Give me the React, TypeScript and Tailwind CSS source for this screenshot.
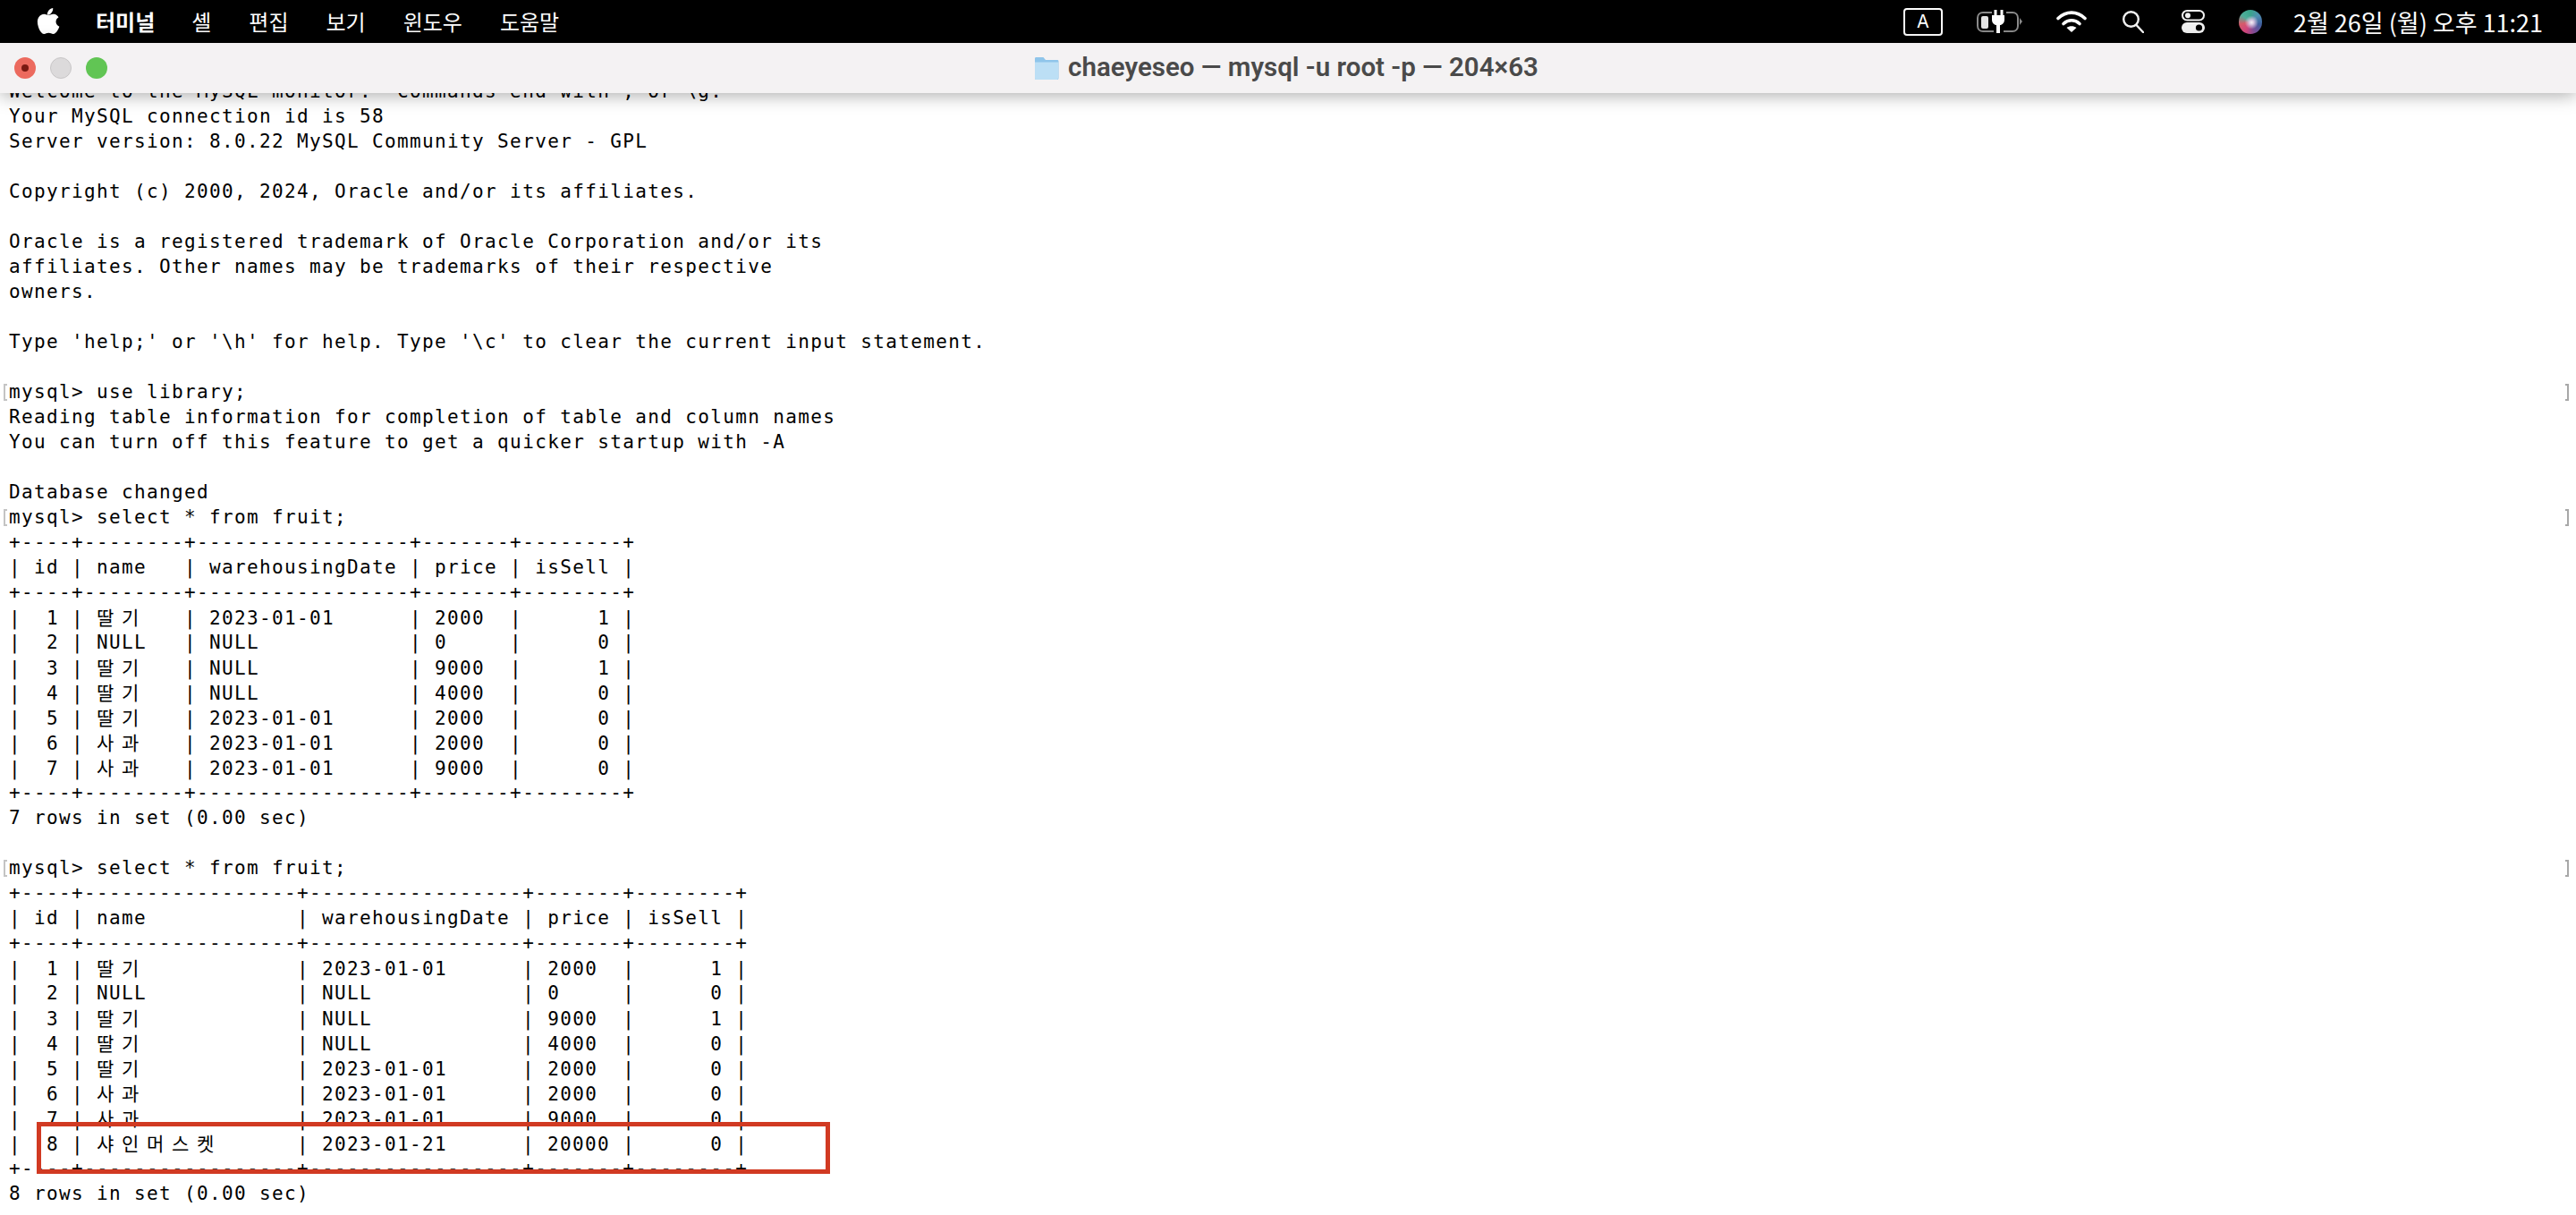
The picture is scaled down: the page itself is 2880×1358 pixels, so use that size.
const mono = "font-['DejaVu_Sans_Mono','Liberation_Mono',monospace]"

const firstTable = [
  '+----+--------+-----------------+-------+--------+',
  '| id | name   | warehousingDate | price | isSell |',
  '+----+--------+-----------------+-------+--------+',
  '|  1 | 딸기   | 2023-01-01      | 2000  |      1 |',
  '|  2 | NULL   | NULL            | 0     |      0 |',
  '|  3 | 딸기   | NULL            | 9000  |      1 |',
  '|  4 | 딸기   | NULL            | 4000  |      0 |',
  '|  5 | 딸기   | 2023-01-01      | 2000  |      0 |',
  '|  6 | 사과   | 2023-01-01      | 2000  |      0 |',
  '|  7 | 사과   | 2023-01-01      | 9000  |      0 |',
  '+----+--------+-----------------+-------+--------+',
]

const secondTable = [
  '+----+-----------------+-----------------+-------+--------+',
  '| id | name            | warehousingDate | price | isSell |',
  '+----+-----------------+-----------------+-------+--------+',
  '|  1 | 딸기            | 2023-01-01      | 2000  |      1 |',
  '|  2 | NULL            | NULL            | 0     |      0 |',
  '|  3 | 딸기            | NULL            | 9000  |      1 |',
  '|  4 | 딸기            | NULL            | 4000  |      0 |',
  '|  5 | 딸기            | 2023-01-01      | 2000  |      0 |',
  '|  6 | 사과            | 2023-01-01      | 2000  |      0 |',
  '|  7 | 사과            | 2023-01-01      | 9000  |      0 |',
  '|  8 | 샤인머스켓      | 2023-01-21      | 20000 |      0 |',
  '+----+-----------------+-----------------+-------+--------+',
]

const lines = [
  'Welcome to the MySQL monitor.  Commands end with ; or \\g.',
  'Your MySQL connection id is 58',
  'Server version: 8.0.22 MySQL Community Server - GPL',
  '',
  'Copyright (c) 2000, 2024, Oracle and/or its affiliates.',
  '',
  'Oracle is a registered trademark of Oracle Corporation and/or its',
  'affiliates. Other names may be trademarks of their respective',
  'owners.',
  '',
  "Type 'help;' or '\\h' for help. Type '\\c' to clear the current input statement.",
  '',
  'mysql> use library;',
  'Reading table information for completion of table and column names',
  'You can turn off this feature to get a quicker startup with -A',
  '',
  'Database changed',
  'mysql> select * from fruit;',
  ...firstTable,
  '7 rows in set (0.00 sec)',
  '',
  'mysql> select * from fruit;',
  ...secondTable,
  '8 rows in set (0.00 sec)',
]

// hangul takes two terminal cells, the glyph sits at the left of them
function TermText({ text }: { text: string }) {
  const parts = text.split(/([\uac00-\ud7a3])/)
  return (
    <>
      {parts.map((part, i) =>
        /[\uac00-\ud7a3]/.test(part) ? (
          <span key={i} className="inline-block w-[28px] text-[21px] tracking-normal font-['Noto_Sans_CJK_KR',sans-serif]">
            {part}
          </span>
        ) : (
          <span key={i}>{part}</span>
        ),
      )}
    </>
  )
}

function TermLine({ text }: { text: string }) {
  const marked = text.startsWith('mysql>')
  return (
    <div className="flex h-[28px] items-center">
      <div className="flex w-[10px] shrink-0 justify-start pl-[4px]">
        {marked && <div className="h-[19px] w-[4px] border-y-2 border-l-2 border-[#c4c4c4]" />}
      </div>
      <div className="flex-1 whitespace-pre">
        <TermText text={text} />
      </div>
      <div className="flex w-[12px] shrink-0 justify-start">
        {marked && <div className="h-[19px] w-[4px] border-y-2 border-r-2 border-[#a8a8a8]" />}
      </div>
    </div>
  )
}

function MenuBar() {
  const items = ['셸', '편집', '보기', '윈도우', '도움말']
  return (
    <div className="flex h-[48px] items-center bg-black pl-[41px] pr-[40px] text-white font-['Noto_Sans_CJK_KR',sans-serif]">
      <svg viewBox="0 0 26 30" className="h-[30px] w-[26px] fill-white">
        <path d="M18.2 0c.2 2-.5 3.9-1.6 5.2-1.100 1.400-2.900 2.500-4.700 2.300-.2-1.900.7-3.900 1.700-5.100C14.800 1 16.800.1 18.200 0zM24.500 10.300c-1.700 1-3 2.800-3 5 0 2.600 1.600 4.500 3.900 5.500-.5 1.500-1.200 3-2.200 4.400-1.300 1.900-2.700 3.800-4.800 3.800-2 0-2.700-1.200-5-1.200-2.400 0-3.100 1.200-5 1.200-2 .1-3.500-2.100-4.900-4C1.600 21.100-.6 14.700 2.300 10.300 3.700 8 6 6.700 8.300 6.700c2.100 0 3.700 1.300 5 1.300 1.300 0 3.200-1.500 5.500-1.300 1 0 3.800.4 5.700 3.600z" />
      </svg>
      <span className="ml-[40px] text-[24px] font-bold leading-none">터미널</span>
      <div className="ml-[41px] flex items-center gap-[42px] text-[24px] leading-none">
        {items.map((item) => (
          <span key={item}>{item}</span>
        ))}
      </div>
      <div className="ml-auto flex items-center">
        <div className="flex h-[31px] w-[44px] items-center justify-center rounded-[4px] border-2 border-white text-[20px] font-['Inter',sans-serif]">A</div>
        <svg viewBox="0 0 51 26" className="ml-[38px] h-[26px] w-[51px]" fill="none">
          <path d="M17 3H7C3.500 3 1 5.500 1 9v9c0 3.500 2.500 6 6 6h12M30 24h10c3.500 0 6-2.500 6-6V9c0-3.500-2.500-6-6-6H33" stroke="#8a8a8a" strokeWidth="2" />
          <rect x="5" y="7" width="8" height="14" rx="2" fill="#e4e4e4" />
          <path d="M48 9l3 4-3 4z" fill="#8a8a8a" />
          <path d="M21 0v7M28 0v7" stroke="#fff" strokeWidth="3" />
          <path d="M17 6h14v5c0 3.500-2.500 6-5 6v9h-4v-9c-2.500 0-5-2.500-5-6z" fill="#fff" />
        </svg>
        <svg viewBox="0 0 34 24" className="ml-[38px] h-[24px] w-[34px]" fill="none" stroke="#fff" strokeWidth="3.600" strokeLinecap="round">
          <path d="M2 8.500c9-8.500 21-8.500 30 0" />
          <path d="M8 14.500c5.500-5 12.500-5 18 0" />
          <path d="M17 24l-5.500-5c3-2.500 8-2.500 11 0z" fill="#fff" stroke="none" />
        </svg>
        <svg viewBox="0 0 24 25" className="ml-[40px] h-[25px] w-[24px]" fill="none" stroke="#f2f2f2" strokeWidth="2.400">
          <circle cx="9.500" cy="9.500" r="8.300" />
          <path d="M15.500 16l7.500 8" strokeLinecap="round" />
        </svg>
        <svg viewBox="0 0 26 26" className="ml-[42px] h-[26px] w-[26px]">
          <rect x="1" y="1" width="24" height="10.500" rx="5.200" fill="none" stroke="#f2f2f2" strokeWidth="2" />
          <circle cx="7" cy="6.200" r="3" fill="#f2f2f2" />
          <rect y="14" width="26" height="12" rx="6" fill="#f2f2f2" />
          <circle cx="19.500" cy="20" r="3.600" fill="#000" />
        </svg>
        <div className="ml-[38px] h-[27px] w-[26px] rounded-full bg-[radial-gradient(circle_at_55%_52%,#f4f2f6_0%,#d9c6e0_12%,transparent_38%),conic-gradient(from_0deg,#3aa58c,#4f8fb0,#3f5f9e,#7a4f9a,#d2477f,#d65a6a,#4fae9a,#3aa58c)]" />
        <span className="ml-[35px] w-[276px] whitespace-nowrap text-right text-[27px] leading-none">2월 26일 (월) 오후 11:21</span>
      </div>
    </div>
  )
}

function TitleBar() {
  return (
    <div className="relative z-10 flex h-[56px] items-center bg-[#f4f2f3] px-[16px] shadow-[0_2px_20px_rgba(0,0,0,0.35)]">
      <div className="flex items-center gap-[16px]">
        <div className="flex h-[24px] w-[24px] items-center justify-center rounded-full bg-[#ec6a5e]">
          <div className="h-[8px] w-[8px] rounded-full bg-[#7a1a12]" />
        </div>
        <div className="h-[24px] w-[24px] rounded-full border border-[#c8c6c7] bg-[#dcdadb]" />
        <div className="h-[24px] w-[24px] rounded-full bg-[#61c554]" />
      </div>
      <div className="flex flex-1 items-center justify-center gap-[10px] pr-[108px]">
        <svg viewBox="0 0 28 27" className="h-[27px] w-[28px]">
          <path d="M1 24V2.500C1 1.500 1.500 1 2.500 1h8l2.500 3h13c1 0 1.500.5 1.500 1.500V24c0 1.500-.5 2-2 2H3c-1.500 0-2-.5-2-2z" fill="#8fc5ea" />
          <path d="M1 24V6.500h26V24c0 1.500-.5 2-2 2H3c-1.500 0-2-.5-2-2z" fill="#bcdff5" />
        </svg>
        <span className="text-[29.500px] font-semibold leading-none text-[#4a4a4a] font-['Roboto',sans-serif]">chaeyeseo — mysql -u root -p — 204×63</span>
      </div>
    </div>
  )
}

export default function App() {
  return (
    <div className="flex h-[1358px] w-[2880px] flex-col overflow-hidden bg-white">
      <MenuBar />
      <TitleBar />
      <div className="relative flex-1 overflow-hidden">
        <div className={`-mt-[16px] text-[21px] leading-[28px] tracking-[1.36px] text-black ${mono}`}>
          {lines.map((line, i) => (
            <TermLine key={i} text={line} />
          ))}
        </div>
        {/* annotation drawn over the screenshot */}
        <div className="absolute left-[41px] top-[1150px] h-[58px] w-[887px] border-[5px] border-[#d13a22]" />
      </div>
    </div>
  )
}
